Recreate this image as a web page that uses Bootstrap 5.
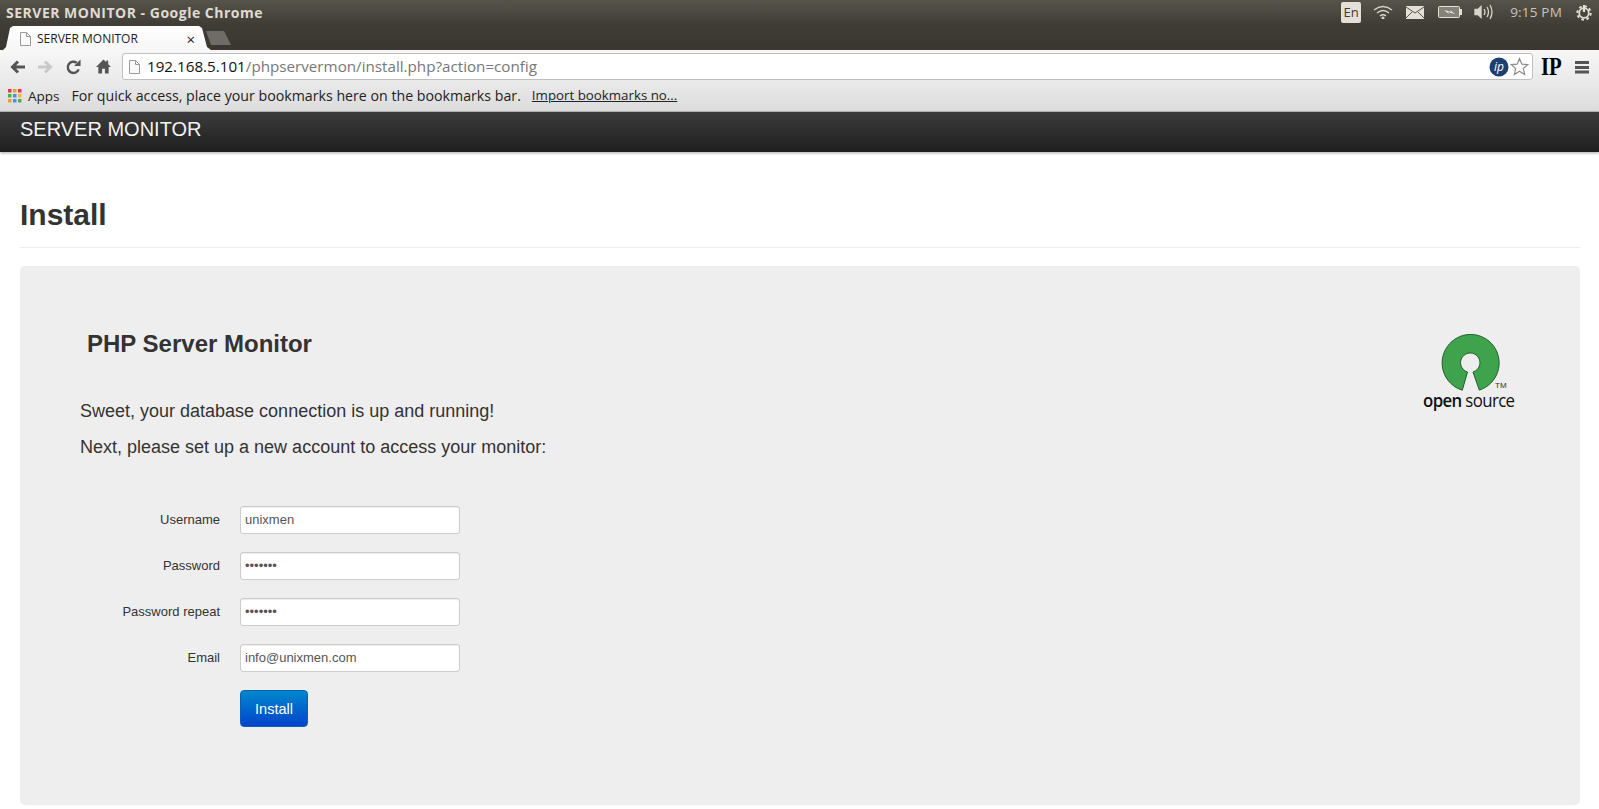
<!DOCTYPE html>
<html lang="en"><head><meta charset="utf-8"><title>SERVER MONITOR</title>
<link rel="stylesheet" href="https://cdn.jsdelivr.net/npm/bootstrap@5.3.0/dist/css/bootstrap.min.css">
<style>
html,body{height:809px;overflow:hidden}
body{font-family:"Liberation Sans",Arial,sans-serif;color:#333;background:#fff}
.ui{font-family:"Open Sans","Noto Sans",sans-serif}
.osbar{height:24px;background:linear-gradient(#56544a,#3f3d36);color:#dfdbd2;font-size:14px;font-weight:700;padding-left:6px;letter-spacing:.5px}
.tray{font-weight:400;letter-spacing:0;margin-right:7px}
.enbox{width:20px;height:21px;background:#e4e0d8;color:#3c3b37;border-radius:2px;font-size:13px;text-align:center;line-height:21px}
.t-wifi{margin-left:12px}.t-mail{margin-left:13px}.t-bat{margin-left:14px}.t-spk{margin-left:12px}
.clock{font-size:13.5px;color:#c9c5bb;margin:0 14px 0 16px;letter-spacing:.2px}
.tabstrip{height:26px;background:linear-gradient(#3f3d36,#38362f);padding-left:3px}
.chrometab{width:208px;height:24px;margin-top:2px;padding:2px 16px 0 17px;background:linear-gradient(#fff,#f6f6f6);font-size:12px;color:#222;clip-path:polygon(0 100%,3px 88%,7px 8%,10px 0,calc(100% - 12px) 0,calc(100% - 9px) 8%,calc(100% - 4px) 88%,100% 100%)}
.tabicon{margin-right:6px;margin-left:0}
.tabx{font-size:15px;line-height:1}
.newtab{width:25px;height:14px;background:#6d6c66;margin:7px 0 0 -5px;clip-path:polygon(5px 100%,0 0,18px 0,100% 100%)}
.toolbar{height:33px;background:linear-gradient(#f7f7f7,#e9e9e9);padding-left:10px}
.tb-gap{margin-left:13px}.tb-home{margin-left:15px}
.omni{width:1411px;height:27px;margin-left:11px;background:#fff;border:1px solid #bfbfbf;border-radius:3px;font-size:15.2px;padding:0 3px 0 6px}
.omni b{font-weight:400;color:#111}
.omni span.pth{color:#777}
.omniico{margin-right:7px}
.ipstar{margin-left:1px}
.ipmark{font-family:"Liberation Serif",serif;font-weight:700;font-size:26px;color:#000;line-height:1;margin-left:8px;width:25px;transform:scaleX(.8);transform-origin:left center}
.burger{margin-left:auto;margin-right:10px}
.bmbar{height:29px;padding:0 0 2px 8px;background:linear-gradient(#e9e9e9,#dcdcdc);border-bottom:1px solid #bcbcbc;font-size:14.2px;color:#222}
.bmbar .appslbl{font-size:13.5px;margin-left:6px;margin-right:12px}
.bmbar u{margin-left:11px;font-size:13.3px}
.topnav{height:40px;background:linear-gradient(#3c3c3c,#1f1f1f);box-shadow:0 1px 3px rgba(0,0,0,.35);padding:0 20px}
.topnav .navbar-brand{color:#f2f2f2;font-size:20px;padding:0;margin:0 0 6px;line-height:24px}
.pagehead{margin:0 19px 0 20px;height:96px;border-bottom:1px solid #eee;padding-top:45px}
.pagehead h1{font-size:30px;font-weight:700;color:#333;line-height:36px;margin:0}
.wellbox{margin:18px 19px 0 20px;height:539px;background:#eee;border-radius:5px;padding:61px 61px 0 60px}
.wellbox h2{font-size:24px;font-weight:700;margin:0 0 0 7px;line-height:33px;color:#333}
.lead-txt{font-size:18px;line-height:25px;margin:0 0 10.5px}
.intro{margin-top:39px}
.formzone{margin-top:46px;width:400px}
.fieldrow{height:28px;margin-bottom:18px}
.fieldrow label{width:140px;text-align:right;font-size:13px;color:#333;margin-right:20px;flex:none;line-height:28px}
.wellbox .form-control{width:220px;height:28px;font-size:13px;padding:2px 4px;border:1px solid #ccc;border-radius:3px;color:#555;box-shadow:inset 0 1px 1px rgba(0,0,0,.075);font-family:"Liberation Sans",sans-serif}
.installbtn{margin:0 0 0 160px;width:68px;height:37px;font-size:14.5px;padding:3px 0 0;background:linear-gradient(#0088cc,#0044cc);border:1px solid #0a5fb4;border-radius:4px;color:#fff}
.oslogo{width:94px;margin-top:7px;text-align:center;flex:none}
.oslogo svg{display:block;margin:0 auto}
.ostxt{font-family:"Open Sans",sans-serif;font-size:18.7px;line-height:18px;color:#111;white-space:nowrap;letter-spacing:-.7px;margin:-1px 0 0 -2px;transform:scaleX(.9);transform-origin:left center;width:110px;text-align:left}
.ostxt b{font-weight:600}
</style></head><body>
<div class="ui">
<div class="osbar d-flex align-items-center justify-content-between"><span>SERVER MONITOR - Google Chrome</span>
<div class="tray d-flex align-items-center">
<span class="enbox">En</span>
<svg width="20" height="14" viewBox="0 0 20 14" class="t-wifi" fill="none" stroke="#d8d5cc" stroke-width="1.500"><path d="M1 5q9-7 18 0M4 8q6-5 12 0M7 11q3-2.500 6 0"/><circle cx="10" cy="13" r=".8" fill="#d8d5cc"/></svg>
<svg width="18" height="13" viewBox="0 0 18 13" class="t-mail"><rect width="18" height="13" fill="#e4e0d8"/><path d="M0 1l9 6 9-6M0 12l6-6M18 12l-6-6" fill="none" stroke="#56544a"/></svg>
<svg width="24" height="12" viewBox="0 0 24 12" class="t-bat"><rect x=".5" y=".5" width="21" height="11" rx="1" fill="#85827a" stroke="#e4e0d8"/><rect x="22" y="3" width="2" height="6" fill="#e4e0d8"/><path d="M6 4l7 2-1-2 5 4-7-2 1 2z" fill="#eee"/></svg>
<svg width="20" height="16" viewBox="0 0 20 16" class="t-spk" fill="none" stroke="#d8d5cc" stroke-width="1.300"><path d="M1 5.500h3l3-3v11l-3-3H1z" fill="#d8d5cc"/><path d="M10 5q2 3 0 6M13 3q3 5 0 10M16 1q4 7 0 14"/></svg>
<span class="clock">9:15 PM</span>
<svg width="16" height="17" viewBox="0 0 16 17" fill="none" stroke="#e4e0d8"><circle cx="8" cy="9" r="6.700" stroke-width="2" stroke-dasharray="2.630 2.630"/><circle cx="8" cy="9" r="4.800" stroke-width="1.800"/><path d="M8 1v7" stroke-width="2.200"/></svg>
</div></div>
<div class="tabstrip d-flex">
<div class="chrometab d-flex align-items-center"><svg width="11" height="14" viewBox="0 0 11 14" class="tabicon" fill="#fafafa" stroke="#999"><path d="M.5.500h6l4 4v9H.5z"/><path d="M6.500.500v4h4" fill="none"/></svg><span>SERVER MONITOR</span><span class="ms-auto tabx">×</span></div>
<div class="newtab"></div></div>
<div class="toolbar d-flex align-items-center">
<svg width="15" height="14" viewBox="0 0 15 14" fill="none" stroke="#555" stroke-width="3"><path d="M15 7H3M8 1.500L2.500 7 8 12.500"/></svg>
<svg width="15" height="14" viewBox="0 0 15 14" class="tb-gap" fill="none" stroke="#c9c9c9" stroke-width="3"><path d="M0 7h12M7 1.500L12.500 7 7 12.500"/></svg>
<svg width="15" height="16" viewBox="0 0 16 16" class="tb-gap" fill="none" stroke="#555" stroke-width="2.600"><path d="M13.500 10.500A6 6 0 1 1 11.500 3.500"/><path d="M8.500 7h7V0z" fill="#555" stroke="none"/></svg>
<svg width="15" height="15" viewBox="0 0 16 15" fill="#555" class="tb-home"><path d="M8 0L0 8h2.500v7h4v-5h3v5h4V8H16l-3-3V1h-2v2z"/></svg>
<div class="omni d-flex align-items-center"><svg width="11" height="14" viewBox="0 0 11 14" class="omniico" fill="#fafafa" stroke="#999"><path d="M.5.500h6l4 4v9H.5z"/><path d="M6.500.500v4h4" fill="none"/></svg><b>192.168.5.101</b><span class="pth">/phpservermon/install.php?action=config</span>
<span class="ms-auto d-flex align-items-center"><svg width="20" height="20" viewBox="0 0 20 20"><circle cx="10" cy="10" r="9.500" fill="#1d3f6e"/><text x="10" y="14" fill="#fff" font-size="12" font-style="italic" text-anchor="middle" font-family="Open Sans">ip</text></svg>
<svg width="19" height="19" viewBox="0 0 24 24" class="ipstar" fill="#fff" stroke="#8a8a8a" stroke-width="1.500"><path d="M12 2l3 7 7.500.600-5.700 5 1.700 7.400L12 18l-6.500 4 1.700-7.400-5.700-5L9 9z"/></svg></span></div>
<span class="ipmark">IP</span>
<svg width="14" height="14" viewBox="0 0 14 14" fill="#555" class="burger"><rect y="1" width="14" height="3"/><rect y="6" width="14" height="3"/><rect y="10.500" width="14" height="3"/></svg>
</div>
<div class="bmbar d-flex align-items-center"><svg width="14" height="14" viewBox="0 0 14 14"><rect width="3.500" height="3.500" fill="#d9413a"/><rect x="5" width="3.500" height="3.500" fill="#e8a02e"/><rect x="10" width="3.500" height="3.500" fill="#d9413a"/><rect y="5" width="3.500" height="3.500" fill="#4caf50"/><rect x="5" y="5" width="3.500" height="3.500" fill="#4f8ee8"/><rect x="10" y="5" width="3.500" height="3.500" fill="#e8c22e"/><rect y="10" width="3.500" height="3.500" fill="#e8a02e"/><rect x="5" y="10" width="3.500" height="3.500" fill="#4f8ee8"/><rect x="10" y="10" width="3.500" height="3.500" fill="#4caf50"/></svg><span class="appslbl">Apps</span><span>For quick access, place your bookmarks here on the bookmarks bar.</span><u>Import bookmarks no...</u></div>
</div>
<nav class="navbar topnav"><a class="navbar-brand" href="#">SERVER MONITOR</a></nav>
<div class="pagehead"><h1>Install</h1></div>
<div class="wellbox">
<div class="d-flex justify-content-between">
<div><h2>PHP Server Monitor</h2>
<div class="intro"><p class="lead-txt">Sweet, your database connection is up and running!</p><p class="lead-txt">Next, please set up a new account to access your monitor:</p></div>
<form class="formzone">
<div class="fieldrow d-flex"><label>Username</label><input class="form-control" type="text" value="unixmen"></div>
<div class="fieldrow d-flex"><label>Password</label><input class="form-control" type="password" value="1234567"></div>
<div class="fieldrow d-flex"><label>Password repeat</label><input class="form-control" type="password" value="1234567"></div>
<div class="fieldrow d-flex"><label>Email</label><input class="form-control" type="text" value="info@unixmen.com"></div>
<button type="button" class="btn btn-primary installbtn">Install</button>
</form></div>
<div class="oslogo">
<svg width="94" height="58" viewBox="0 0 94 58"><path transform="translate(15.500 0)" d="M21.800 56.200A28.500 28.500 0 1 1 38.800 56.100L32.500 38A9.700 9.700 0 1 0 27 38Z" fill="#3fa34d" stroke="#1f5f2a" stroke-width="1"/><text x="70" y="54" font-size="8" fill="#333" font-family="Liberation Sans">TM</text></svg>
<div class="ostxt"><b>open</b> source</div>
</div>
</div>
</div>
</body></html>
